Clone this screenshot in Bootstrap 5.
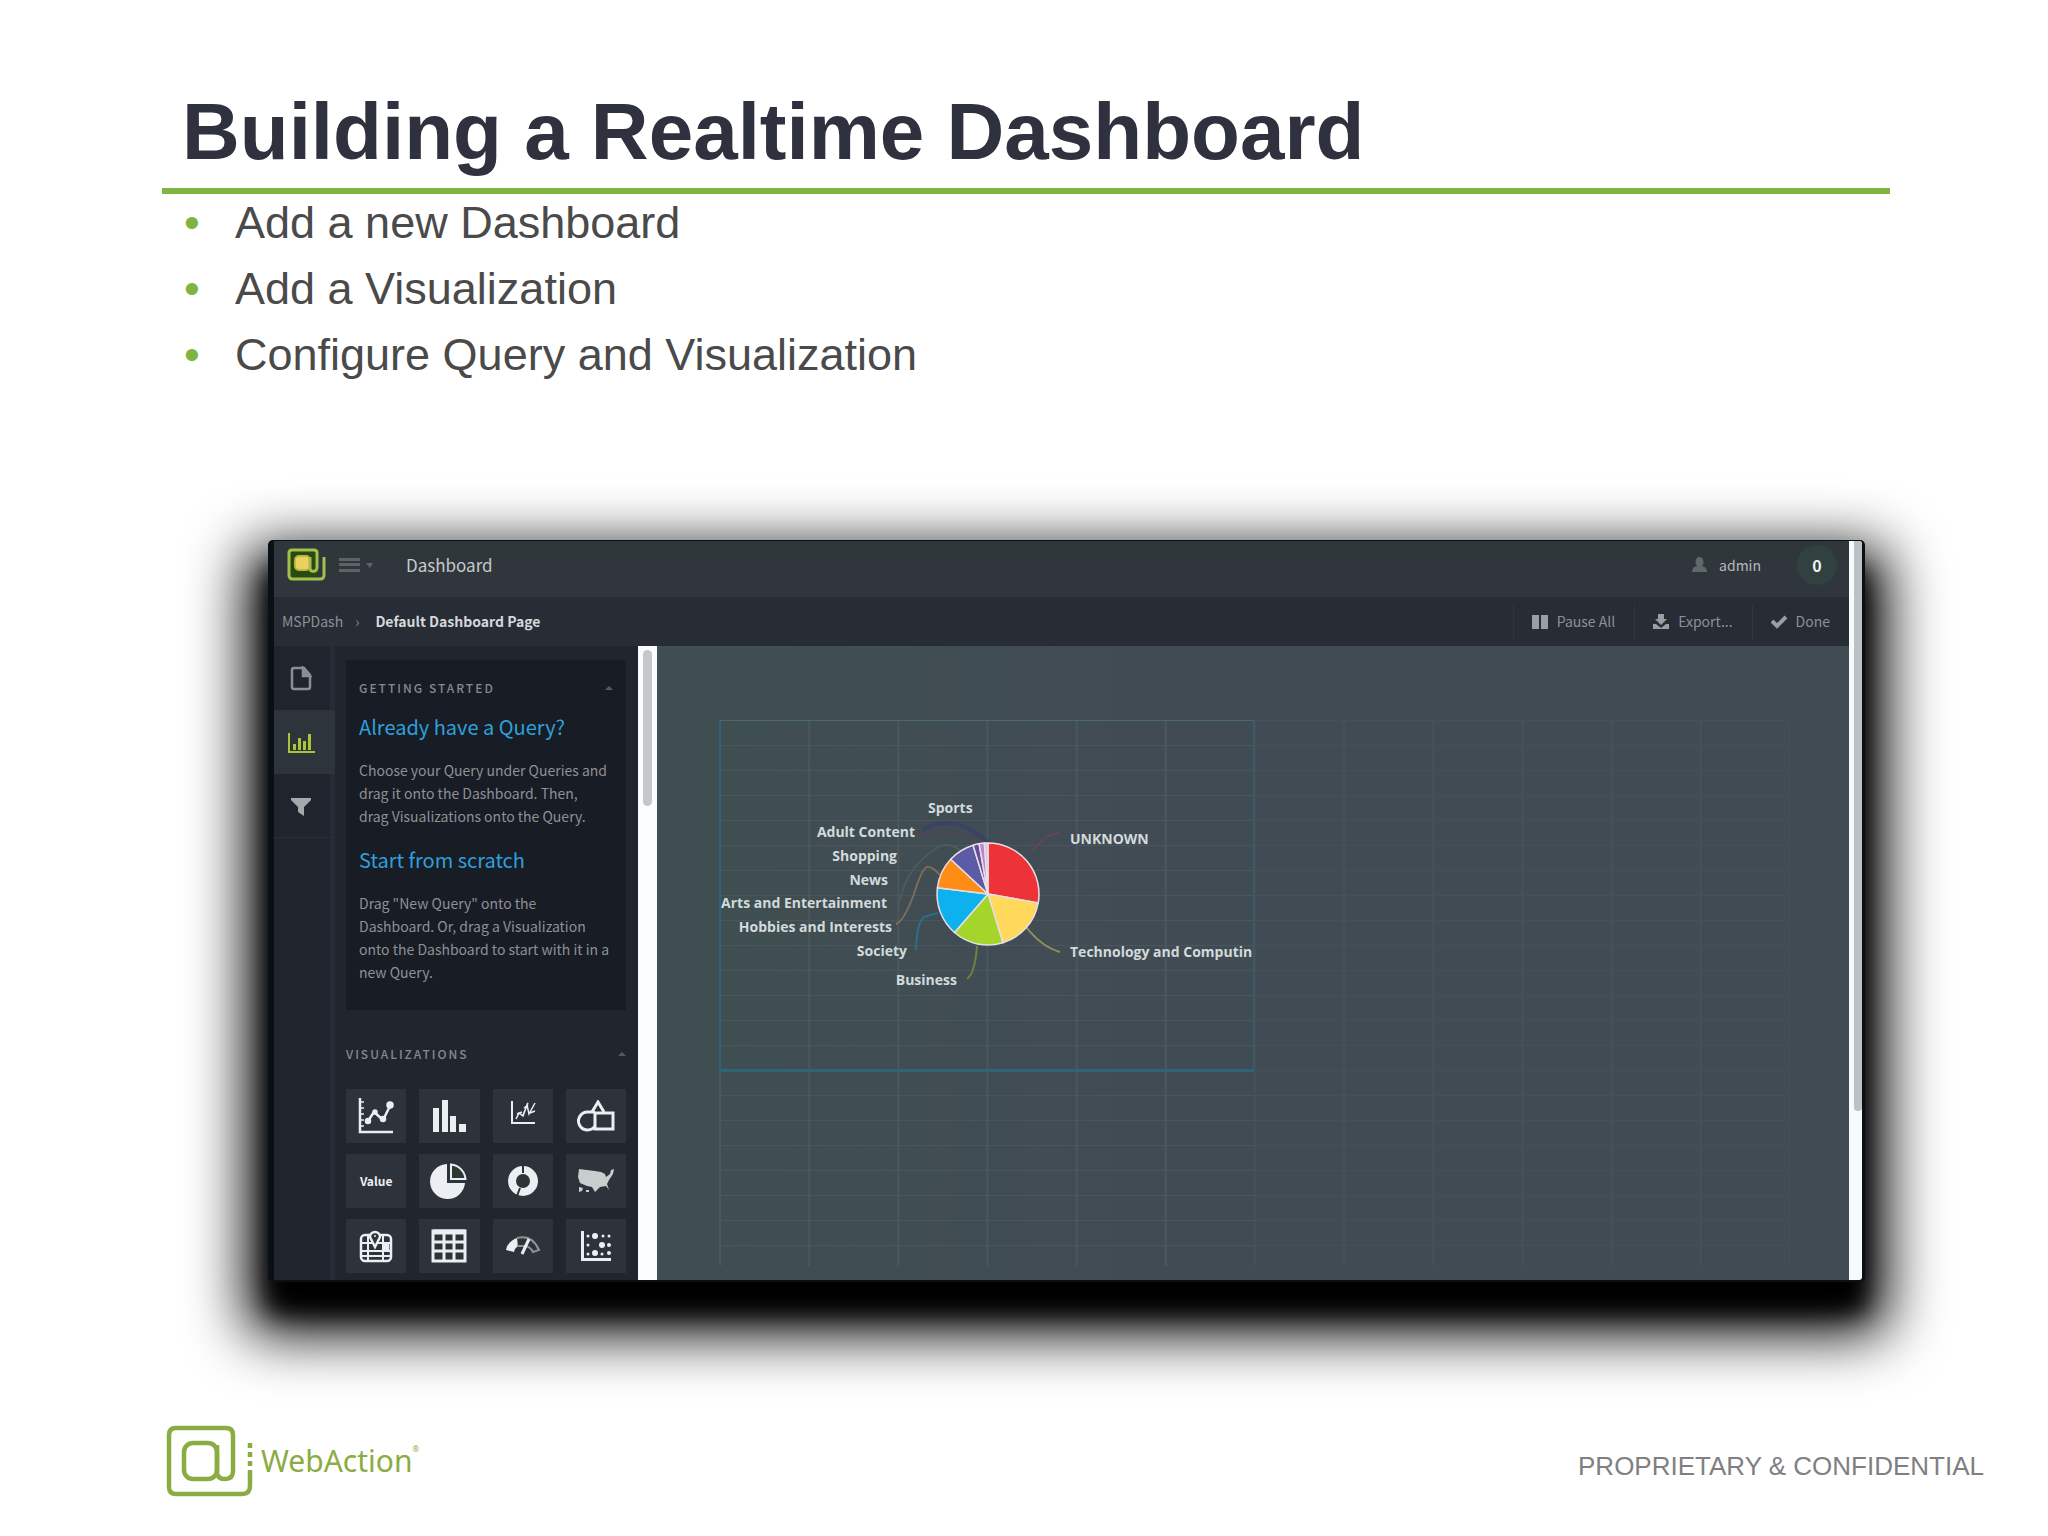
<!DOCTYPE html>
<html lang="en">
<head>
<meta charset="utf-8">
<meta name="viewport" content="width=device-width, initial-scale=1">
<title>Building a Realtime Dashboard</title>
<link href="https://cdn.jsdelivr.net/npm/bootstrap@5.3.0/dist/css/bootstrap.min.css" rel="stylesheet">
<style>
  body { font-family: "Liberation Sans", Arial, sans-serif; background: #fff; color: #4a4a4a; }
  .slide-head { margin: 92px 158px 0 162px; padding: 0 20px 16px; border-bottom: 6px solid #80b441; }
  .slide-title { font-size: 80px; line-height: 80px; font-weight: 700; color: #2f323e; }
  .points { margin: 0 158px 157px 184px; font-size: 45px; line-height: 57px; gap: 9px; }
  .points li::before { content: "•"; color: #80b441; display: inline-block; width: 51px; }

  /* product window */
  .app-window { margin: 0 183px 0 268px; padding: 1px 3px 2px 6px; background: #0b1017; border-radius: 5px;
    box-shadow: 0 30px 58px 22px #000, 0 30px 24px 0 #000; font-family: "Noto Sans CJK SC", "Noto Sans", sans-serif; font-size: 14px; color: #8d9196; }
  .app-window button, .app-window a { font: inherit; color: inherit; text-decoration: none; background: none; border: 0; padding: 0; }
  .top-strip { height: 56px; background: linear-gradient(#2f373a, #31363e); padding: 0 12px 8px 13px; }
  .top-strip .app-name { font-size: 17px; color: #c6c9cc; margin-left: 31px; }
  .user-name { color: #b5b9bc; margin: 0 36px 0 12px; }
  .count-dot { width: 40px; height: 40px; border-radius: 50%; background: #30413f; color: #eef2f2; font-weight: 700; font-size: 16px; }
  .crumb-strip { height: 49px; background: #272c35; padding-left: 8px; }
  .crumb-strip .page-here { color: #d5d8db; font-weight: 700; }
  .app-window .crumb-strip .tool { border-left: 1px solid #30353e; height: 36px; padding: 0 19px 0 18px; }
  .crumb-strip .tool svg { margin-right: 9px; }
  .rail { width: 61px; background: #20252d; border-right: 5px solid #282c36; }
  .app-window .rail button { height: 64px; width: 61px; padding-right: 7px; color: #8b8f94; margin-right: -5px; }
  .app-window .rail button.on { background: #2d343b; color: #a9c63a; }
  .app-window .rail button.last { border-bottom: 1px solid #2a2f37; }
  .side { width: 303px; background: #21262e; padding: 14px 12px 7px 11px; }
  .intro { background: #181c24; padding: 17px 13px 26px 13px; line-height: 23px; }
  .side-label { font-size: 12px; line-height: 22px; font-weight: 500; letter-spacing: 2px; color: #858a90; }
  .intro h3 { font-size: 20px; line-height: 30px; font-weight: 400; color: #2fa0dc; margin: 13px 0 17px; }
  .intro p + h3 { margin-top: 17px; }
  .viz-head { margin-top: 33px; margin-bottom: 24px; }
  .tiles { --bs-gutter-x: 13px; --bs-gutter-y: 11px; }
  .app-window .tiles button { height: 54px; background: #2d323b; color: #eceff1; width: 100%; font-weight: 700; font-size: 12px; }
  .bar-track { width: 19px; background: #fbfcfd; padding: 4px 5px; }
  .bar-thumb { width: 9px; height: 156px; border-radius: 5px; background: #c5c8c9; }
  .canvas-area { background: linear-gradient(90deg, #3f4f51, #414b54 40%); padding: 74px 59px 14px 62px; }
  .snap-grid { min-height: 100%; border-right: 1px solid #454f58;
    background-image: linear-gradient(90deg, transparent 50%, rgba(65, 75, 84, .55) 50%), linear-gradient(90deg, #4a585d 2px, transparent 2px), linear-gradient(#49575c 1px, transparent 1px);
    background-size: 100% 100%, calc(100% / 12) 100%, 100% 25px; }
  .widget { border: 2px solid #2f6478; border-width: 1px 1px 3px 2px; border-top-color: #4a6a70; height: 352px; }
  .widget svg { display: block; }
  .page-track { width: 13px; background: #f4fbfa; padding-left: 5px; border-radius: 0 3px 3px 0; }
  .page-thumb { height: 570px; background: #bdc1c3; border-radius: 0 3px 4px 4px; }

  .slide-foot { margin: 143px 64px 0 166px; }
  .brand { font: 30px/40px "Noto Sans", sans-serif; color: #8aac42; }
  .brand sup { font-size: 8px; top: -20px; }
  .notice { font-size: 26px; line-height: 30px; color: #808083; }
</style>
<script src="https://cdn.jsdelivr.net/npm/bootstrap@5.3.0/dist/js/bootstrap.bundle.min.js"></script>
</head>
<body>
<header class="slide-head">
  <h1 class="slide-title m-0">Building a Realtime Dashboard</h1>
</header>
<ul class="points list-unstyled d-flex flex-column">
  <li>Add a new Dashboard</li>
  <li>Add a Visualization</li>
  <li>Configure Query and Visualization</li>
</ul>

<main class="app-window d-flex">
  <div class="flex-grow-1 d-flex flex-column">
    <div class="top-strip d-flex align-items-center">
      <a href="#" aria-label="Home"><svg class="d-block" width="40" height="34" viewBox="0 0 40 34" fill="none"><rect x="2" y="2" width="29" height="28" rx="5" fill="#2b4a12"/><rect x="8" y="8" width="15" height="14" rx="4" fill="#f0cf62" stroke="#b3bd3c" stroke-width="2"/><path d="M23 9v12q1 3 5 2q2-1 2-4V5q0-3-3-3H5Q2 2 2 5v22q0 4 4 4h27q4 0 4-4V9" stroke="#a3c04c" stroke-width="3"/></svg></a>
      <button type="button" aria-label="Menu" class="ms-2 ps-1"><svg class="d-block" width="36" height="16" viewBox="0 0 36 16" fill="#5d6367"><path d="M0 1h21v3H0zM0 6h21v3H0zM0 12h21v3H0zM27 6h7l-3 5z"/></svg></button>
      <span class="app-name">Dashboard</span>
      <svg class="ms-auto" width="15" height="16" viewBox="0 0 15 16" fill="#5f686b"><ellipse cx="7.500" cy="5" rx="4" ry="5"/><path d="M0 15q0-5 5-6h5q5 1 5 6z"/></svg>
      <span class="user-name">admin</span>
      <span class="count-dot d-flex align-items-center justify-content-center">0</span>
    </div>
    <div class="crumb-strip d-flex align-items-center">
      <a href="#" class="crumb-root">MSPDash</a>
      <span class="ps-2 pe-2 ms-1 me-2">›</span>
      <span class="page-here">Default Dashboard Page</span>
      <button type="button" class="tool d-flex align-items-center ms-auto"><svg width="16" height="16" viewBox="0 0 16 16" fill="#9b9fa3"><path d="M0 1h7v14H0zM9 1h7v14H9z"/></svg>Pause All</button>
      <button type="button" class="tool d-flex align-items-center"><svg width="16" height="16" viewBox="0 0 16 16" fill="#9b9fa3"><path d="M5 0h6v5h3l-6 6-6-6h3zM0 10h3l5 4 5-4h3v5H0z"/></svg>Export...</button>
      <button type="button" class="tool d-flex align-items-center"><svg width="16" height="14" viewBox="0 0 16 14" fill="none" stroke="#9b9fa3" stroke-width="4"><path d="M1 6l5 5 9-9"/></svg>Done</button>
    </div>
    <div class="d-flex flex-grow-1">
      <nav class="rail d-flex flex-column" aria-label="Tools">
        <button type="button" aria-label="Pages"><svg width="22" height="25" viewBox="0 0 22 25" fill="none" stroke="currentColor" stroke-width="2.500"><path d="M4 2h10l6 7v12q0 2-2 2H4q-2 0-2-2V4q0-2 2-2z"/><path d="M13 2v8h7z" fill="currentColor"/></svg></button>
        <button type="button" class="on" aria-label="Visualizations"><svg width="27" height="22" viewBox="0 0 27 22" fill="currentColor"><path d="M0 1h2v18h25v2H0zM5 12h3v6H5zM10 6h3v12h-3zM15 9h3v9h-3zM20 2h3v16h-3z"/></svg></button>
        <button type="button" class="last" aria-label="Filters"><svg width="20" height="18" viewBox="0 0 20 18" fill="#a5a9ac"><path d="M0 0h20v2l-7 7v9l-6-4V9L0 2z"/></svg></button>
      </nav>
      <aside class="side">
        <section class="intro">
          <div class="side-label d-flex justify-content-between align-items-center">GETTING STARTED <svg width="8" height="6" viewBox="0 0 8 6" fill="#555a60"><path d="M0 5l4-4 4 4z"/></svg></div>
          <h3>Already have a Query?</h3>
          <p class="m-0">Choose your Query under Queries and drag it onto the Dashboard. Then,<br>drag Visualizations onto the Query.</p>
          <h3>Start from scratch</h3>
          <p class="m-0">Drag "New Query" onto the Dashboard. Or, drag a Visualization onto the Dashboard to start with it in a new Query.</p>
        </section>
        <div class="viz-head side-label d-flex justify-content-between align-items-center">VISUALIZATIONS <svg width="8" height="6" viewBox="0 0 8 6" fill="#555a60"><path d="M0 5l4-4 4 4z"/></svg></div>
        <div class="tiles row row-cols-4">
          <div class="col"><button type="button" aria-label="Line chart"><svg width="36" height="36" viewBox="0 0 36 36" fill="none" stroke="currentColor" stroke-width="2.500"><path d="M2 0v34h33"/><path d="M2 4h4M2 10h4M2 16h4M2 22h4M2 28h4" stroke-width="1.500"/><path d="M10 23l6-9 9 8 7-14"/><g fill="currentColor"><circle cx="10" cy="23" r="2"/><circle cx="17" cy="14" r="1.500"/><circle cx="25" cy="21" r="2"/><circle cx="32" cy="7" r="2.500"/></g></svg></button></div>
          <div class="col"><button type="button" aria-label="Bar chart"><svg width="34" height="34" viewBox="0 0 34 34" fill="currentColor"><path d="M1 9h6v24H1zM10 1h6v32h-6zM18 17h6v16h-6zM27 25h7v8h-7z"/></svg></button></div>
          <div class="col"><button type="button" aria-label="Scatter plot"><svg class="mb-2" width="26" height="25" viewBox="0 0 26 25" fill="none" stroke="currentColor" stroke-width="2"><path d="M2 1v22h23"/><path d="M6 19l3-6 4 3 4-11 2 9 6-11M14 8l4-3M20 13l5-2M7 14l5-2M18 3l-5 12" stroke-width="1.500"/></svg></button></div>
          <div class="col"><button type="button" aria-label="Shapes"><svg width="38" height="32" viewBox="0 0 38 32" fill="none" stroke="currentColor" stroke-width="3"><path d="M15 12l6-10 6 10"/><path d="M18 12H11a9 9 0 1 0 7 14"/><path d="M18 13h18v16H18z"/></svg></button></div>
          <div class="col"><button type="button">Value</button></div>
          <div class="col"><button type="button" aria-label="Pie chart"><svg width="38" height="38" viewBox="0 0 38 38" fill="currentColor"><path d="M17 2a17.500 17.500 0 1 0 18 19H17z"/><path d="M21 2.500A16 16 0 0 1 35.500 17H21z" fill="#2d3a33" stroke="currentColor" stroke-width="2"/></svg></button></div>
          <div class="col"><button type="button" aria-label="Donut chart"><svg width="32" height="32" viewBox="0 0 32 32" fill="none"><circle cx="16" cy="16" r="11" stroke="currentColor" stroke-width="8"/><path d="M16 0v8M13 23l-3 8" stroke="#2d323b" stroke-width="2"/></svg></button></div>
          <div class="col"><button type="button" aria-label="Map of the United States"><svg width="38" height="26" viewBox="0 0 38 26" fill="#c9cdce"><path d="M2 1l16 2 6 1 4 2 1 3 4-3 1-4 3-1-1 5-4 6-2 4 2 6-3-4-6 1-5 5-3-5-5-1-7-3-2-6zM2 19l4 1-1 3-3 1zM9 22h3v2H9z"/></svg></button></div>
          <div class="col"><button type="button" aria-label="Street map"><svg width="34" height="34" viewBox="0 0 34 34" fill="none" stroke="currentColor" stroke-width="2.500"><rect x="2" y="6" width="30" height="26" rx="4"/><path d="M2 14h30M2 22h30M9 6v26M24 6v26" stroke-width="2"/><path d="M16 18l-5-10a5 5 0 1 1 10 0z" fill="#2d323b"/><circle cx="16" cy="7" r="1" fill="currentColor" stroke="none"/><path d="M25 16h4v5h-4z" fill="currentColor"/><path d="M3 27h28" stroke-width="2"/></svg></button></div>
          <div class="col"><button type="button" aria-label="Table"><svg width="36" height="34" viewBox="0 0 36 34" fill="none" stroke="currentColor" stroke-width="3"><path d="M2 2h32v30H2zM2 13h32M2 22h32M13 4v28M23 4v28"/><path d="M2 3h32" stroke-width="5"/></svg></button></div>
          <div class="col"><button type="button" aria-label="Gauge"><svg width="36" height="20" viewBox="0 0 36 20" fill="none" stroke="currentColor"><path d="M1 14q1-8 11-12l1 9q-3 0-4 5z" fill="currentColor" stroke="none"/><path d="M12 2q15-4 22 12l-6 2q-3-6-9-6l-7 0" stroke="#8d9295" stroke-width="2"/><path d="M17 18l7-15" stroke-width="3"/></svg></button></div>
          <div class="col"><button type="button" aria-label="Heat map"><svg width="32" height="32" viewBox="0 0 32 32" fill="currentColor"><path d="M1 1h3v27h27v3H1z"/><circle cx="8" cy="6" r="1.500"/><circle cx="15" cy="6" r="3"/><circle cx="23" cy="6" r="1.500"/><circle cx="29" cy="6" r="1.500"/><circle cx="8" cy="15" r="1.500"/><circle cx="22" cy="15" r="3"/><circle cx="29" cy="15" r="2"/><circle cx="8" cy="24" r="1.500"/><circle cx="15" cy="23" r="3"/><circle cx="22" cy="24" r="1.500"/><circle cx="29" cy="23" r="2"/></svg></button></div>
        </div>
      </aside>
      <div class="bar-track"><div class="bar-thumb"></div></div>
      <section class="canvas-area flex-grow-1 d-flex flex-column">
        <div class="snap-grid flex-grow-1">
          <div class="row g-0"><div class="col-6">
            <div class="widget">
              <svg width="100%" height="348" viewBox="1 0 532 348" role="img" aria-label="Share of categories">
                <g fill="none" stroke-width="2">
                  <path d="M203 109q12-8 28-7t38 20" stroke="#3a4268" stroke-width="4"/>
                  <path d="M197 115q35-12 62 8" stroke="#52465a"/>
                  <path d="M180 180q6-35 40-55q10-3 20 4" stroke="#4c5b5c"/>
                  <path d="M312 130l14-14 14-5" stroke="#614655"/>
                  <path d="M176 203q8-3 18-30q8-26 13-27t13 8" stroke="#7d6c56"/>
                  <path d="M196 229q1-28 8-33l14-4" stroke="#2b7186"/>
                  <path d="M247 258q8-6 10-33" stroke="#71803e"/>
                  <path d="M306 206q16 20 34 25" stroke="#94905c"/>
                </g>
                <g stroke="#e8dfe6" stroke-width="1.500" stroke-linejoin="round">
                  <path fill="#ee3338" d="M268 173V122A51 51 0 0 1 318.200 181.900z"/>
                  <path fill="#ffd85c" d="M268 173L318.200 181.900A51 51 0 0 1 282.900 221.800z"/>
                  <path fill="#a4d52a" d="M268 173L282.900 221.800A51 51 0 0 1 234.500 211.500z"/>
                  <path fill="#0db1ee" d="M268 173L234.500 211.500A51 51 0 0 1 217.400 166.800z"/>
                  <path fill="#ff8c14" d="M268 173L217.400 166.800A51 51 0 0 1 230.700 138.200z"/>
                  <path fill="#5d5aa6" d="M268 173L230.700 138.200A51 51 0 0 1 253.100 124.200z"/>
                  <path fill="#6a4a9c" d="M268 173L253.100 124.200A51 51 0 0 1 259.100 122.800z"/>
                  <path fill="#b58ad0" d="M268 173L259.100 122.800A51 51 0 0 1 264.400 122.100z"/>
                  <path fill="#e3c3e4" d="M268 173L264.400 122.100A51 51 0 0 1 268 122z"/>
                </g>
                <g font-family="Open Sans, sans-serif" font-weight="700" font-size="14" fill="#d3dadb">
                  <text x="208" y="92">Sports</text>
                  <text x="350" y="123">UNKNOWN</text>
                  <text x="350" y="236">Technology and Computin</text>
                  <g text-anchor="end">
                    <text x="195" y="116">Adult Content</text>
                    <text x="177" y="140">Shopping</text>
                    <text x="168" y="164">News</text>
                    <text x="167" y="187">Arts and Entertainment</text>
                    <text x="172" y="211">Hobbies and Interests</text>
                    <text x="187" y="235">Society</text>
                    <text x="237" y="264">Business</text>
                  </g>
                </g>
              </svg>
            </div>
          </div></div>
        </div>
      </section>
    </div>
  </div>
  <div class="page-track"><div class="page-thumb"></div></div>
</main>

<footer class="slide-foot d-flex justify-content-between align-items-start">
  <div class="d-flex align-items-center">
    <svg width="87" height="72" viewBox="0 0 87 72" fill="none" stroke="#8aac42" stroke-width="4.500"><path d="M51 20v27q0 7 8 7 8 0 8-8V10q0-7-7-7H10q-7 0-7 7v52q0 7 7 7h66q8 0 8-8V45"/><rect x="18" y="18" width="33" height="36" rx="9"/><path d="M84 18v5M84 27v5M84 36v5"/></svg>
    <span class="brand ms-1 ps-1">WebAction<sup>®</sup></span>
  </div>
  <div class="notice mt-auto mb-3">PROPRIETARY &amp; CONFIDENTIAL</div>
</footer>
</body>
</html>
